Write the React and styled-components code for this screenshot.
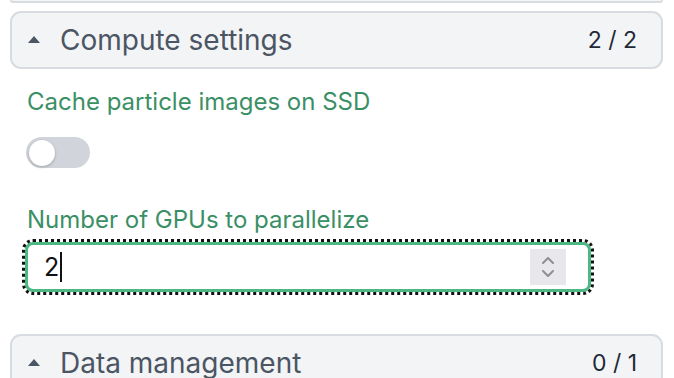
import React from 'react'
import styled, { createGlobalStyle } from 'styled-components';

const GlobalStyle = createGlobalStyle`
  body {
    margin: 0;
    background: #ffffff;
    font-family: Inter, "Noto Sans", sans-serif;
  }
`

function Section({ title, count, top }) {
    return (
        <Panel $top={top}>
            <Caret />
            <PanelTitle>{title}</PanelTitle>
            <Count>{count}</Count>
        </Panel>
    )
}

function App() {
    return (
        <Page>
            <GlobalStyle />
            <PanelEnd />
            <Section title="Compute settings" count="2 / 2" top={8} />
            <Body>
                <Label>Cache particle images on SSD</Label>
                <Toggle>
                    <Knob />
                </Toggle>
                <Label $gap>Number of GPUs to parallelize</Label>
                <Field>
                    <Value>2</Value>
                    <TextCursor />
                    <Spinner>
                        <svg width="16" height="26" viewBox="0 0 16 26" fill="none" stroke="#8e8e93" strokeWidth="2" strokeLinecap="round" strokeLinejoin="round">
                            <path d="M3 9 L8 4 L13 9" />
                            <path d="M3 17 L8 22 L13 17" />
                        </svg>
                    </Spinner>
                </Field>
            </Body>
            <Section title="Data management" count="0 / 1" top={0} />
        </Page>
    )
}

export default App;

const Page = styled.div`
                padding: 0 11px 0 10px;
                height: 378px;
                overflow: hidden;
                `
const PanelEnd = styled.div`
                height: 1px;
                border: 2px solid #d8dbe0;
                border-top: none;
                border-radius: 0 0 10px 10px;
                background: #f3f4f6;
                `
const Panel = styled.div`
                margin-top: ${props => props.$top}px;
                height: 54px;
                display: flex;
                align-items: center;
                padding: 0 24px 0 16px;
                background: #f3f4f6;
                border: 2px solid #d8dbe0;
                border-radius: 11px;
                color: #4b5563;
                `
const Caret = styled.span`
                width: 0;
                height: 0;
                border-left: 6px solid transparent;
                border-right: 6px solid transparent;
                border-bottom: 7px solid #4b5563;
                margin-right: 20px;
                margin-top: -2px;
                `
const PanelTitle = styled.span`
                flex: 1;
                font-size: 28px;
                `
const Count = styled.span`
                font-size: 23px;
                color: #1f2937;
                `
const Body = styled.div`
                padding: 18px 0 42px 15px;
                `
const Label = styled.div`
                font-size: 24px;
                line-height: 30px;
                color: #3b8f65;
                margin-left: 2px;
                margin-top: ${props => props.$gap ? '37px' : '0'};
                `
const Toggle = styled.div`
                width: 64px;
                height: 31px;
                margin: 20px 0 0 1px;
                border-radius: 16px;
                background: #d1d5db;
                display: flex;
                align-items: center;
                padding-left: 3px;
                box-sizing: border-box;
                `
const Knob = styled.div`
                width: 26px;
                height: 26px;
                border-radius: 50%;
                background: #ffffff;
                box-shadow: 0 1px 3px rgba(0,0,0,0.25);
                `
const Field = styled.div`
                margin: 7px 72px 0 0;
                height: 50px;
                box-sizing: border-box;
                display: flex;
                align-items: center;
                padding: 0 22px 0 16px;
                border: 3px solid #4cb985;
                outline: 3px dotted #111111;
                outline-offset: 0;
                border-radius: 8px;
                background: #ffffff;
                `
const Value = styled.span`
                font-size: 25px;
                color: #111111;
                `
const TextCursor = styled.span`
                width: 2px;
                height: 30px;
                background: #111111;
                margin-left: 1px;
                flex: none;
                `
const Spinner = styled.div`
                margin-left: auto;
                width: 36px;
                height: 36px;
                background: #e8e8ec;
                display: flex;
                align-items: center;
                justify-content: center;
                `
